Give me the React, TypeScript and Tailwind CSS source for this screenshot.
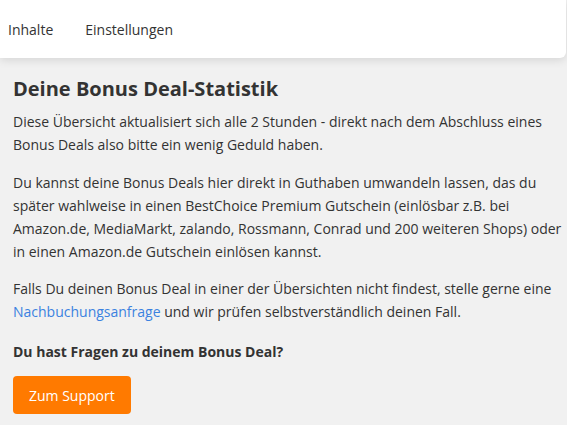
export default function App() {
  return (
    <div className="min-h-[425px] bg-[#f1f1f1] font-['Open_Sans',sans-serif] text-[#333]">
      <nav className="flex h-[58px] w-[566px] items-center gap-8 rounded-br-[6px] bg-white px-2 text-[14px] shadow-[0_2px_10px_rgba(0,0,0,0.12)]">
        <span>Inhalte</span>
        <span>Einstellungen</span>
      </nav>
      <main className="pl-[13px] pr-[4px] pt-[17px]">
        <h1 className="text-[20px] font-bold leading-[28px]">Deine Bonus Deal-Statistik</h1>
        <p className="mt-[7px] text-[14px] leading-[23px]">
          Diese Übersicht aktualisiert sich alle 2 Stunden - direkt nach dem Abschluss eines Bonus Deals also bitte ein wenig Geduld haben.
        </p>
        <p className="mt-[15px] text-[14px] leading-[23px]">
          Du kannst deine Bonus Deals hier direkt in Guthaben umwandeln lassen, das du später wahlweise in einen BestChoice Premium Gutschein (einlösbar z.B. bei Amazon.de, MediaMarkt, zalando, Rossmann, Conrad und 200 weiteren Shops) oder in einen Amazon.de Gutschein einlösen kannst.
        </p>
        <p className="mt-[14px] text-[14px] leading-[23px]">
          Falls Du deinen Bonus Deal in einer der Übersichten nicht findest, stelle gerne eine{" "}
          <a className="text-[#3b82e0]">Nachbuchungsanfrage</a> und wir prüfen selbstverständlich deinen Fall.
        </p>
        <p className="mt-[17px] text-[14px] font-bold leading-[23px]">Du hast Fragen zu deinem Bonus Deal?</p>
        <button className="mt-[13px] h-[38px] rounded-[4px] bg-[#ff7a00] px-4 text-[14px] text-white">
          Zum Support
        </button>
      </main>
    </div>
  );
}
